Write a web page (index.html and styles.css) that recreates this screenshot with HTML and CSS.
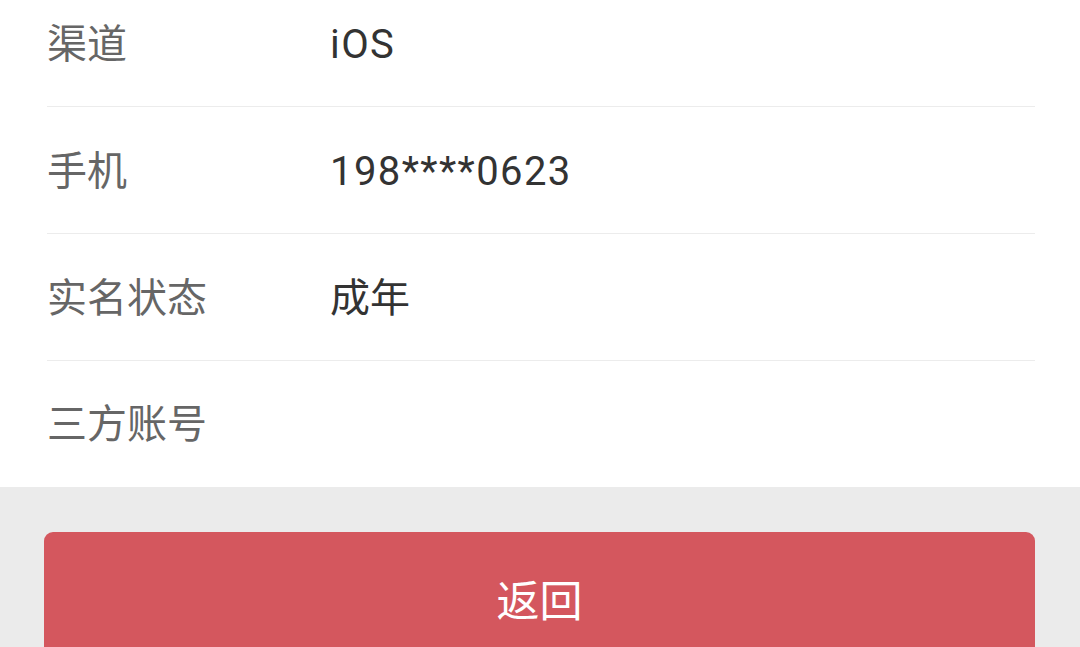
FILE: index.html
```html
<!DOCTYPE html>
<html lang="zh-CN">
<head>
<meta charset="utf-8">
<link rel="stylesheet" href="styles.css">
</head>
<body>
<div class="page">
  <div class="list">
    <div class="row"><span class="label">渠道</span><span class="value latin">iOS</span></div>
    <div class="row"><span class="label">手机</span><span class="value latin">198****0623</span></div>
    <div class="row"><span class="label">实名状态</span><span class="value">成年</span></div>
    <div class="row"><span class="label">三方账号</span><span class="value"></span></div>
  </div>
  <div class="actions">
    <button class="btn">返回</button>
  </div>
</div>
</body>
</html>
```
FILE: styles.css
```css
html, body {
  margin: 0;
  padding: 0;
  background: #ebebeb;
  overflow: hidden;
}
body {
  font-family: "Roboto", "Noto Sans CJK SC", sans-serif;
  -webkit-font-smoothing: antialiased;
}
.page {
  margin-top: -20px;
}
.list {
  background: #ffffff;
  padding-left: 47px;
  padding-right: 45px;
}
.row {
  display: flex;
  align-items: center;
  height: 121px;
  padding-bottom: 5px;
  border-bottom: 1px solid #ececec;
  font-size: 40px;
}
.row:last-child {
  border-bottom: none;
  height: 119px;
  padding-bottom: 7px;
}
.label {
  width: 283px;
  color: #666666;
  flex-shrink: 0;
}
.value {
  color: #333333;
}
.value.latin {
  letter-spacing: 1.4px;
  padding-top: 7px;
}
.actions {
  padding: 45px 45px 0 44px;
}
.btn {
  display: block;
  width: 100%;
  height: 136px;
  border: none;
  border-radius: 9px;
  background: #d4575e;
  color: #ffffff;
  font-family: "Noto Sans CJK SC", sans-serif;
  font-size: 43px;
  padding: 0 0 4px 0;
}
```
